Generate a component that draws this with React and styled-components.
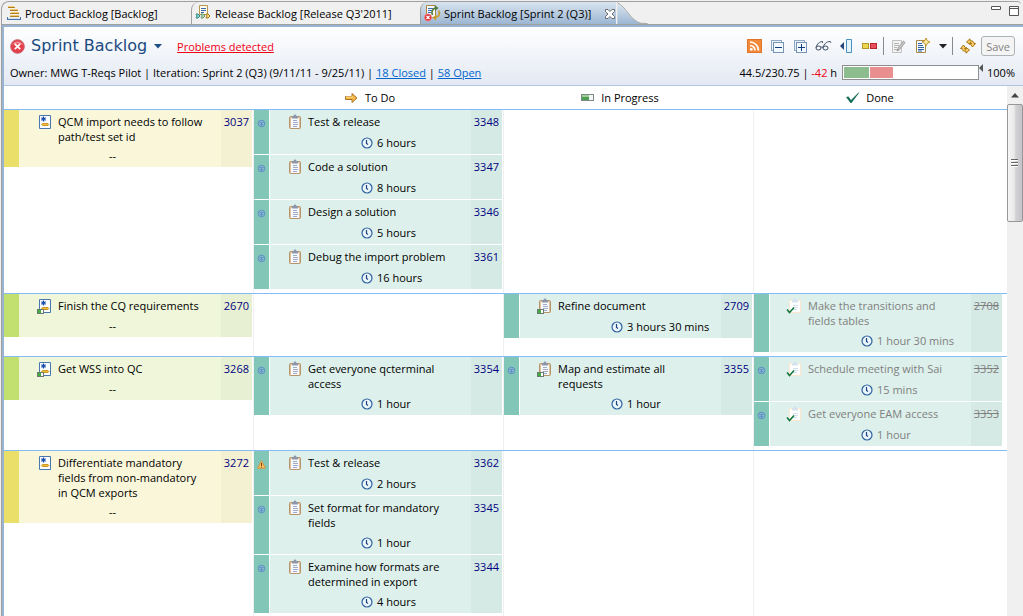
import React from "react";
import styled, { createGlobalStyle, css } from "styled-components";

const rows = [
  {
    story: { tone: "yellow", title: "QCM import needs to follow path/test set id", id: 3037 },
    todo: [
      { title: "Test & release", id: 3348, time: "6 hours", mark: "info" },
      { title: "Code a solution", id: 3347, time: "8 hours", mark: "info" },
      { title: "Design a solution", id: 3346, time: "5 hours", mark: "info" },
      { title: "Debug the import problem", id: 3361, time: "16 hours", mark: "info" },
    ],
    progress: [],
    done: [],
  },
  {
    story: { tone: "green", title: "Finish the CQ requirements", id: 2670, started: true },
    todo: [],
    progress: [{ title: "Refine document", id: 2709, time: "3 hours 30 mins" }],
    done: [{ title: "Make the transitions and fields tables", id: 2708, time: "1 hour 30 mins" }],
  },
  {
    story: { tone: "green", title: "Get WSS into QC", id: 3268, started: true },
    todo: [{ title: "Get everyone qcterminal access", id: 3354, time: "1 hour", mark: "info" }],
    progress: [{ title: "Map and estimate all requests", id: 3355, time: "1 hour", mark: "info" }],
    done: [
      { title: "Schedule meeting with Sai", id: 3352, time: "15 mins", mark: "info" },
      { title: "Get everyone EAM access", id: 3353, time: "1 hour", mark: "info" },
    ],
  },
  {
    story: {
      tone: "yellow",
      title: "Differentiate mandatory fields from non-mandatory in QCM exports",
      id: 3272,
    },
    todo: [
      { title: "Test & release", id: 3362, time: "2 hours", mark: "warn" },
      { title: "Set format for mandatory fields", id: 3345, time: "1 hour", mark: "info" },
      { title: "Examine how formats are determined in export", id: 3344, time: "4 hours", mark: "info" },
    ],
    progress: [],
    done: [],
  },
];

const tones = {
  yellow: { strip: "#e9df69", body: "#f9f6da", id: "#f4f0d2" },
  green: { strip: "#c1e06f", body: "#eff6da", id: "#e8f0d3" },
  teal: { strip: "#82c6b8", body: "#ddf0eb", id: "#d6eae5" },
};

/* ---------- icons ---------- */

function BacklogIcon() {
  return (
    <svg width="16" height="16" viewBox="0 0 16 16" shapeRendering="crispEdges">
      <path d="M2 1h6v1H2zM4 4h8v1H4zM5 7h8v1H5zM4 10h9v1H4z" fill="#f0cb74" />
      <path d="M2 2h7v1H2zM4 5h8v1H4zM4 8h9v1H4zM4 11h9v1H4z" fill="#b07f22" />
      <path d="M1 12h1v3H1zM14 12h1v3h-1zM2 14h12v1H2z" fill="#4a73a8" />
      <path d="M2 13h12v1H2z" fill="#cfe0f2" />
    </svg>
  );
}

function ReleaseIcon() {
  return (
    <svg width="17" height="16" viewBox="0 0 17 16">
      <path d="M4.500.500h8v9h-8z" fill="#fffdf0" stroke="#b9974a" />
      <path d="M6 3.500h5M6 5.500h5M6 7.500h3" stroke="#3c66a8" />
      <path d="M1 9h2l2 2-2 2H1l1-2z" fill="#8fd0c4" stroke="#2e8c86" />
      <path d="M6 9h2l2 2-2 2H6l1-2z" fill="#bfdf9a" stroke="#5d9178" />
      <path d="M11 9h2l2 2-2 2h-2l1-2z" fill="#f7df7c" stroke="#a97a1a" />
    </svg>
  );
}

function SprintIcon() {
  return (
    <svg width="17" height="17" viewBox="0 0 17 17">
      <path d="M2.500.500h9v12h-9z" fill="#f3f8ff" stroke="#b18a3c" />
      <path d="M4 3.500h5M4 5.500h4M4 7.500h3" stroke="#3e70b8" />
      <path d="M8.500 10c-1.500-3 0-6.500 3-7" fill="none" stroke="#5a7a35" strokeWidth="1.600" />
      <path d="M10.500 0l4 3-3.500 3z" fill="#4d7a3a" />
      <path d="M14.500 5.500c2 3 .5 6.500-3 7" fill="none" stroke="#c79a2c" strokeWidth="1.600" />
      <path d="M12.500 9.500l-4 3 3.500 3z" fill="#c79a2c" />
      <circle cx="4" cy="12.500" r="3.700" fill="#e0353c" stroke="#f6b3b3" strokeWidth=".6" />
      <path d="M2.500 11l3 3m0-3l-3 3" stroke="#fff" strokeWidth="1.200" />
    </svg>
  );
}

function CloseIcon() {
  return (
    <svg width="12" height="12" viewBox="0 0 12 12">
      <path
        d="M1.500 1.500h2.500l2 2 2-2h2.500v2l-2.500 2.500 2.500 2.500v2H8l-2-2-2 2H1.500v-2L4 6 1.500 3.500z"
        fill="#fff"
        stroke="#6c6c6c"
      />
    </svg>
  );
}

function ErrorIcon() {
  return (
    <svg width="15" height="15" viewBox="0 0 15 15">
      <circle cx="7.500" cy="7.500" r="6.800" fill="#e4404c" stroke="#c9606a" strokeWidth="1" />
      <path d="M2 6a6 6 0 0 1 11 0c-3-2-8-2-11 0z" fill="#f08a90" />
      <path d="M4.800 4.800l5.400 5.400m0-5.400l-5.400 5.400" stroke="#fff" strokeWidth="1.800" />
    </svg>
  );
}

function CaretIcon({ color = "#222" }) {
  return (
    <svg width="8" height="5" viewBox="0 0 8 5">
      <path d="M0 0h8L4 4.500z" fill={color} />
    </svg>
  );
}

function RssIcon() {
  return (
    <svg width="16" height="16" viewBox="0 0 16 16">
      <path d="M0 1h15v14H0z" fill="#f28a3c" />
      <path d="M.500 1.500h14v13H.500z" fill="none" stroke="#e2742a" />
      <circle cx="4.300" cy="11.300" r="1.400" fill="#fff" />
      <path d="M3 7.500a5 5 0 0 1 5 5M3 4a8.500 8.500 0 0 1 8.500 8.500" fill="none" stroke="#fff" strokeWidth="1.700" />
    </svg>
  );
}

function FoldIcon({ plus }) {
  return (
    <svg width="16" height="16" viewBox="0 0 16 16" shapeRendering="crispEdges">
      <path d="M1.500 2.500h10v10h-10z" fill="#eaf3fb" stroke="#8fa9c4" />
      <path d="M3.500 4.500h10v10h-10z" fill="#f2f9ff" stroke="#7792b2" />
      <path d="M5 9h7v1H5z" fill="#0b3c84" />
      {plus && <path d="M8 6h1v7H8z" fill="#0b3c84" />}
    </svg>
  );
}

function GlassesIcon() {
  return (
    <svg width="17" height="16" viewBox="0 0 17 16" fill="none" stroke="#3b4d66">
      <ellipse cx="3.500" cy="10" rx="2.500" ry="2" />
      <ellipse cx="10.500" cy="10" rx="2.500" ry="2" />
      <path d="M6 9.500c.4-.6 1.600-.6 2 0M1 9.500C2 6 4.500 3.500 7.500 3.500v1.500M8 9.500c1-3.500 3.500-6 7-6 .6 0 .8.600.8 1.500" />
    </svg>
  );
}

function CollapsePaneIcon() {
  return (
    <svg width="16" height="16" viewBox="0 0 16 16">
      <path d="M5 4v8L1 8z" fill="#24457a" />
      <path d="M7.500 1.500h5v13h-5z" fill="#e4f3fc" stroke="#4a90bf" />
    </svg>
  );
}

function SwatchIcon() {
  return (
    <svg width="16" height="16" viewBox="0 0 16 16" shapeRendering="crispEdges">
      <path d="M.500 5.500h6v5h-6z" fill="#ecd84c" stroke="#b3982a" />
      <path d="M8.500 5.500h6v5h-6z" fill="#e8505c" stroke="#b3262e" />
    </svg>
  );
}

function EditIcon() {
  return (
    <svg width="16" height="16" viewBox="0 0 16 16">
      <path d="M1.500 2.500h9v12h-9z" fill="#f4f4f4" stroke="#c0c0c0" />
      <path d="M3 5.500h5M3 7.500h5M3 9.500h3M3 11.500h3" stroke="#b4b4b4" />
      <path d="M7.500 11L13.500 3.500" stroke="#a8a8a8" strokeWidth="3" />
      <path d="M8 10.500L13.500 3.500" stroke="#d8d8d8" />
      <path d="M5.500 13.500l1-3 2 1.500z" fill="#888" />
    </svg>
  );
}

function NewTaskIcon() {
  return (
    <svg width="16" height="16" viewBox="0 0 16 16">
      <path d="M2.500 2.500h9v12h-9z" fill="#f6faff" stroke="#a98a45" />
      <path d="M4 5.500h4M4 7.500h5M4 9.500h6M4 11.500h6M4 13h4" stroke="#2f5fa5" />
      <path d="M12 0l1.300 2.700L16 4l-2.700 1.300L12 8l-1.300-2.700L8 4l2.700-1.300z" fill="#fbeaa0" stroke="#b98a22" strokeWidth=".9" />
    </svg>
  );
}

function SyncIcon() {
  return (
    <svg width="16" height="16" viewBox="0 0 16 16">
      <g fill="#f8d066" stroke="#a87412" strokeLinejoin="round">
        <path d="M6.500 4L10 .800v2C13 2.500 14 4 13.800 5.500h1.700l-3 3.500L10 5.500h1.500c0-.8-.5-1-1.500-1v2z" />
        <path d="M9.500 12L6 15.200v-2C3 13.500 2 12 2.200 10.500H.500l3-3.500L6 10.500H4.500c0 .8.500 1 1.500 1v-2z" />
      </g>
    </svg>
  );
}

function ArrowIcon() {
  return (
    <svg width="14" height="12" viewBox="0 0 14 12">
      <path d="M.500 4.500H7V1.500L12 6l-5 4.500v-3H.500z" fill="#f6b743" stroke="#a9742a" />
      <path d="M1 5h7" stroke="#fde39b" />
    </svg>
  );
}

function ProgressIcon() {
  return (
    <svg width="14" height="12" viewBox="0 0 14 12" shapeRendering="crispEdges">
      <path d="M.500 2.500h12v6H.500z" fill="#f4f8f4" stroke="#7c8a8a" />
      <path d="M1 3h7v5H1z" fill="#4f9e52" />
      <path d="M1 3h7v2H1z" fill="#9ccf9a" />
    </svg>
  );
}

function CheckIcon() {
  return (
    <svg width="14" height="12" viewBox="0 0 14 12">
      <path d="M0 5l2.500-.5L5 8l7.500-7.500.5.500L5.500 11H4.500z" fill="#17705a" />
    </svg>
  );
}

function StoryIcon({ started }) {
  return (
    <svg width="16" height="16" viewBox="0 0 16 16">
      <path d="M3.500 1.500h11v13h-11z" fill="#fbfdff" stroke="#4a77ad" />
      <path d="M7.500 2.500v5M5.300 3.800l4.400 2.500M9.700 3.800L5.300 6.300" stroke="#1449a8" strokeWidth="1.200" />
      <path d="M6.500 9.500h5.500l1 1-1 1H6.500l-1-1z" fill="#f0bd33" stroke="#c9962a" />
      {started && <StartedMark />}
    </svg>
  );
}

function StartedMark() {
  return (
    <g shapeRendering="crispEdges">
      <path d="M1.500 11.500h6v4h-6z" fill="#fff" stroke="#6d7a70" />
      <path d="M2 12h3v3H2z" fill="#3fae3f" />
    </g>
  );
}

function TaskIcon({ state }) {
  const done = state === "done";
  return (
    <svg width="16" height="16" viewBox="0 0 16 16">
      {done ? (
        <g>
          <path d="M3.500 2.500h11v12h-11z" fill="#fff" stroke="#fce8cc" />
          <path d="M6 3.500c0-1 1-1.500 1.500-1.500.5-2 2.500-2 3 0 .5 0 1.500.5 1.500 1.500v1H6z" fill="#d3e3f1" />
          <path d="M7 7.500h5M7 9.500h5M7 11.500h4" stroke="#cfe0ee" />
          <path d="M1 11.500l2.500 3L8 9.500" fill="none" stroke="#14773f" strokeWidth="1.600" />
        </g>
      ) : (
        <g>
          <rect x="3.500" y="2.500" width="11" height="12" rx="1" fill="#dcc19c" stroke="#b8946a" />
          <path d="M5 4h8v10H5z" fill="#f7f9fd" />
          <path d="M6 3.500c0-1 1-1.500 1.500-1.500.5-2 2.500-2 3 0 .5 0 1.500.5 1.500 1.500v1H6z" fill="#8b96ab" />
          <path d="M7 6.500h4M7 8.500h5M7 10.500h5M7 12.500h4" stroke="#8796bd" strokeWidth=".8" />
        </g>
      )}
      {state === "progress" && <StartedMark />}
    </svg>
  );
}

function ClockIcon() {
  return (
    <svg width="12" height="12" viewBox="0 0 12 12">
      <circle cx="6" cy="6" r="5" fill="#eaf5fc" stroke="#2f62a0" strokeWidth="1.200" />
      <path d="M5.500 3v3.500l1.500 1" fill="none" stroke="#1d4480" strokeWidth="1.200" />
    </svg>
  );
}

function InfoMark() {
  return (
    <svg width="9" height="9" viewBox="0 0 9 9">
      <circle cx="4.500" cy="4.500" r="3.300" fill="#86b8d0" stroke="#5a8bc0" strokeWidth=".9" />
      <path d="M2.500 3.500h4M4.500 3.500V7M3 5.500h3" stroke="#5a8bc0" strokeWidth=".8" />
    </svg>
  );
}

function WarnMark() {
  return (
    <svg width="9" height="9" viewBox="0 0 9 9">
      <path d="M4.500.800L8.300 8.200H.700z" fill="#f8c65a" stroke="#d8923a" strokeLinejoin="round" />
      <path d="M4.500 3v3M4.500 6.700v1" stroke="#7a4310" />
    </svg>
  );
}

/* ---------- board ---------- */

function Card({ item, kind }) {
  const tone = tones[item.tone || "teal"];
  return (
    <CardBox>
      <Strip $color={tone.strip}>
        {item.mark === "info" && <InfoMark />}
        {item.mark === "warn" && <WarnMark />}
      </Strip>
      <CardBody $color={tone.body} $joined={kind === "story"}>
        {kind === "story" ? <StoryIcon started={item.started} /> : <TaskIcon state={kind} />}
        <CardText $muted={kind === "done"}>
          <CardTitle>{item.title}</CardTitle>
          {kind === "story" ? (
            <Estimate>--</Estimate>
          ) : (
            <Time>
              <ClockIcon />
              {item.time}
            </Time>
          )}
        </CardText>
      </CardBody>
      <CardId $color={tone.id} $closed={kind === "done"}>
        {item.id}
      </CardId>
    </CardBox>
  );
}

function Column({ items, kind }) {
  return (
    <Cell>
      {items.map((item) => (
        <Card key={item.id} item={item} kind={kind} />
      ))}
    </Cell>
  );
}

export default function App() {
  return (
    <Window>
      <GlobalStyle />
      <TabBar role="tablist">
        <Tab role="tab" $size={189}>
          <BacklogIcon />
          Product Backlog [Backlog]
        </Tab>
        <Tab role="tab" $size={229} $divided>
          <ReleaseIcon />
          Release Backlog [Release Q3'2011]
        </Tab>
        <ActiveTab role="tab" aria-selected="true">
          <SprintIcon />
          Sprint Backlog [Sprint 2 (Q3)]
          <CloseIcon />
        </ActiveTab>
        <TabTail width="33" height="25" viewBox="0 0 33 25">
          <defs>
            <linearGradient id="tail" x1="0" y1="0" x2="0" y2="1">
              <stop offset="0" stopColor="#d9e4ef" />
              <stop offset="1" stopColor="#99b4d1" />
            </linearGradient>
          </defs>
          <path d="M0 2C9 5 14 21 27 23.500L33 25H0z" fill="url(#tail)" />
          <path d="M0 1C9 4 14 20 25 23l8 .500" fill="none" stroke="#a0a0a0" />
        </TabTail>
        <TabFill />
        <WindowButton aria-label="Minimize">
          <svg width="10" height="10" viewBox="0 0 10 10">
            <path d="M.500 .500h9v3h-9z" fill="#fff" stroke="#555" />
          </svg>
        </WindowButton>
        <WindowButton aria-label="Maximize">
          <svg width="10" height="10" viewBox="0 0 10 10">
            <path d="M.500 .500h9v9h-9zM.500 2.500h9" fill="#fff" stroke="#555" />
          </svg>
        </WindowButton>
      </TabBar>

      <Editor>
        <Header>
          <HeaderRow $height={20}>
            <ErrorIcon />
            <Heading>Sprint Backlog</Heading>
            <IconButton aria-label="Switch backlog">
              <CaretIcon color="#1f4f86" />
            </IconButton>
            <ProblemLink href="#problems">Problems detected</ProblemLink>
            <Toolbar>
              <ToolButton aria-label="Feed"><RssIcon /></ToolButton>
              <ToolButton aria-label="Collapse all"><FoldIcon /></ToolButton>
              <ToolButton aria-label="Expand all"><FoldIcon plus /></ToolButton>
              <ToolButton aria-label="Find"><GlassesIcon /></ToolButton>
              <ToolButton aria-label="Hide column"><CollapsePaneIcon /></ToolButton>
              <ToolButton aria-label="Colors"><SwatchIcon /></ToolButton>
              <Separator />
              <ToolButton aria-label="Edit" disabled><EditIcon /></ToolButton>
              <ToolButton aria-label="New task"><NewTaskIcon /></ToolButton>
              <ToolButton $size={12} aria-label="New task menu"><CaretIcon /></ToolButton>
              <Separator />
              <ToolButton aria-label="Refresh"><SyncIcon /></ToolButton>
              <SaveButton disabled>Save</SaveButton>
            </Toolbar>
          </HeaderRow>
          <HeaderRow $height={16}>
            <Summary>
              Owner: MWG T-Reqs Pilot | Iteration: Sprint 2 (Q3) (9/11/11 - 9/25/11) |{" "}
              <a href="#closed">18 Closed</a> | <a href="#open">58 Open</a>
            </Summary>
            <Hours>
              44.5/230.75 | <em>-42</em> h
            </Hours>
            <Meter role="progressbar" aria-valuenow={19} aria-label="Hours">
              <MeterPart $color="#8dbd8e" $width={25} />
              <MeterPart $color="#e98f8f" $width={23} />
            </Meter>
            <MeterMark width="4" height="8" viewBox="0 0 4 8">
              <path d="M4 0v8L0 4z" fill="#555" />
            </MeterMark>
            <Percent>100%</Percent>
          </HeaderRow>
        </Header>

        <BoardArea>
          <Board>
            <ColumnHeads>
              <ColumnHead />
              <ColumnHead><ArrowIcon />To Do</ColumnHead>
              <ColumnHead><ProgressIcon />In Progress</ColumnHead>
              <ColumnHead><CheckIcon />Done</ColumnHead>
            </ColumnHeads>
            {rows.map((row) => (
              <Row key={row.story.id}>
                <Column items={[row.story]} kind="story" />
                <Column items={row.todo} kind="todo" />
                <Column items={row.progress} kind="progress" />
                <Column items={row.done} kind="done" />
              </Row>
            ))}
          </Board>
          <ScrollBar>
            <ScrollArrow aria-label="Scroll up">
              <svg width="8" height="5" viewBox="0 0 8 5">
                <path d="M4 0l4 4.500H0z" fill="#444" />
              </svg>
            </ScrollArrow>
            <ScrollThumb>
              <svg width="8" height="8" viewBox="0 0 8 8" shapeRendering="crispEdges">
                <path d="M0 0h7v1H0zM0 3h7v1H0zM0 6h7v1H0z" fill="#666" />
                <path d="M0 1h7v1H0zM0 4h7v1H0zM0 7h7v1H0z" fill="#fff" />
              </svg>
            </ScrollThumb>
          </ScrollBar>
        </BoardArea>
      </Editor>
    </Window>
  );
}

const GlobalStyle = createGlobalStyle`
  * {
    box-sizing: border-box;
  }
  body {
    margin: 0;
    background: #f0f0f0;
    color: #000;
    font: 11px/15px "Open Sans", "Noto Sans", sans-serif;
  }
  button {
    margin: 0;
    padding: 0;
    border: none;
    background: none;
    color: inherit;
    font: inherit;
  }
  svg {
    flex: none;
    display: block;
  }
`;

const Window = styled.div`
  display: flex;
  flex-direction: column;
  height: 100vh;
  padding-top: 1px;
  overflow: hidden;
`;

const TabBar = styled.div`
  display: flex;
  flex: none;
  height: 24px;
  margin: 0 2px 0 1px;
  border-top: 1px solid #a0a0a0;
  border-left: 1px solid #a0a0a0;
  border-radius: 8px 4px 0 0;
`;

const tabBase = css`
  display: flex;
  align-items: center;
  gap: 3px;
  padding-left: 4px;
  white-space: nowrap;
`;

const Tab = styled.button`
  ${tabBase}
  width: ${(p) => p.$size}px;
  border-bottom: 1px solid #a0a0a0;
  ${(p) =>
    p.$divided &&
    css`
      padding-left: 3px;
      border-left: 1px solid #a0a0a0;
      border-top-left-radius: 8px;
    `}
`;

const ActiveTab = styled.button`
  ${tabBase}
  padding-left: 3px;
  border-left: 1px solid #a0a0a0;
  border-top-left-radius: 8px;
  background: linear-gradient(#d9e4ef, #99b4d1);
  & > svg:last-child {
    margin-left: 10px;
  }
`;

const TabTail = styled.svg`
  height: 100%;
`;

const TabFill = styled.div`
  flex: 1;
  border-bottom: 1px solid #a0a0a0;
`;

const WindowButton = styled.button`
  display: flex;
  align-items: flex-start;
  padding: 4px 2px 0 6px;
  border-bottom: 1px solid #a0a0a0;
`;

const Editor = styled.main`
  display: flex;
  flex: 1;
  flex-direction: column;
  min-height: 0;
  margin-left: 2px;
  border: solid #99b4d1;
  border-width: 2px 0 0 2px;
  outline: 1px solid #a0a0a0;
  background: #fff;
`;

const Header = styled.header`
  flex: none;
  padding: 9px 8px 5px 6px;
  border-bottom: 1px solid #b0c6de;
  background: linear-gradient(#fff, #e3e9f3);
`;

const HeaderRow = styled.div`
  display: flex;
  align-items: center;
  height: ${(p) => p.$height}px;
  & + & {
    margin-top: 8px;
  }
`;

const Heading = styled.h1`
  margin: 0 7px 0 6px;
  color: #1b4a80;
  font: 16px/20px "DejaVu Sans", Verdana, sans-serif;
`;

const ProblemLink = styled.a`
  margin-left: 15px;
  color: #f00014;
`;

const IconButton = styled.button`
  display: flex;
  align-items: center;
`;

const Toolbar = styled.div`
  display: flex;
  align-items: center;
  gap: 5px;
  margin-left: auto;
`;

const ToolButton = styled(IconButton)`
  justify-content: flex-end;
  width: ${(p) => p.$size || 18}px;
`;

const Separator = styled.span`
  width: 1px;
  height: 18px;
  background: #8a8a8a;
`;

const SaveButton = styled.button`
  height: 20px;
  padding: 0 4px;
  border: 1px solid #adb2b5;
  border-radius: 3px;
  background: #f4f4f4;
  color: #838383;
`;

const Summary = styled.span`
  white-space: nowrap;
  & > a {
    color: #0066cc;
  }
`;

const Hours = styled.span`
  margin: 0 5px 0 auto;
  white-space: nowrap;
  & > em {
    color: #f00014;
    font-style: normal;
  }
`;

const Meter = styled.div`
  display: flex;
  gap: 1px;
  width: 137px;
  height: 15px;
  padding: 1px;
  border: 1px solid #8e8f8f;
  background: #fff;
`;

const MeterPart = styled.div`
  width: ${(p) => p.$width}px;
  background: ${(p) => p.$color};
`;

const MeterMark = styled.svg`
  align-self: flex-start;
`;

const Percent = styled.span`
  margin-left: 4px;
`;

const BoardArea = styled.div`
  display: flex;
  flex: 1;
  min-height: 0;
`;

const Board = styled.section`
  flex: 1;
  overflow: hidden;
`;

const columns = css`
  display: grid;
  grid-template-columns: repeat(4, minmax(0, 1fr));
  padding-right: 3px;
  border-bottom: 1px solid #84bdf6;
`;

const ColumnHeads = styled.div`
  ${columns}
  height: 24px;
`;

const ColumnHead = styled.div`
  display: flex;
  align-items: center;
  justify-content: center;
  gap: 6px;
  padding-right: 18px;
`;

const Row = styled.div`
  ${columns}
`;

const Cell = styled.div`
  display: flex;
  flex-direction: column;
  gap: 1px;
  padding: 0 1px 4px 0;
  border-right: 1px solid #f0f0f0;
  &:last-child {
    border-right-color: transparent;
  }
`;

const CardBox = styled.article`
  display: flex;
`;

const Strip = styled.div`
  display: flex;
  flex: none;
  justify-content: center;
  width: 15px;
  padding-top: 9px;
  background: ${(p) => p.$color};
`;

const CardBody = styled.div`
  display: flex;
  flex: 1;
  gap: 6px;
  min-width: 0;
  margin-left: ${(p) => (p.$joined ? 0 : 1)}px;
  padding: 4px 14px 4px ${(p) => (p.$joined ? 17 : 16)}px;
  background: ${(p) => p.$color};
`;

const CardText = styled.div`
  flex: 1;
  min-width: 0;
  color: ${(p) => (p.$muted ? "#808080" : "#000")};
`;

const CardTitle = styled.div`
  min-height: 16px;
  margin-bottom: 5px;
`;

const Estimate = styled.div`
  padding-left: 51px;
  line-height: 14px;
`;

const Time = styled.div`
  display: flex;
  align-items: center;
  gap: 4px;
  padding-left: 53px;
  white-space: nowrap;
`;

const CardId = styled.div`
  flex: none;
  width: 31px;
  padding: 4px 3px 0 0;
  background: ${(p) => p.$color};
  color: ${(p) => (p.$closed ? "#808080" : "#000080")};
  text-align: right;
  text-decoration: ${(p) => (p.$closed ? "line-through" : "none")};
`;

const ScrollBar = styled.div`
  display: flex;
  flex: none;
  flex-direction: column;
  width: 16px;
  background: #f0f0f0;
`;

const ScrollArrow = styled.button`
  display: flex;
  align-items: center;
  justify-content: center;
  height: 18px;
`;

const ScrollThumb = styled.div`
  display: flex;
  align-items: center;
  justify-content: center;
  height: 118px;
  border: 1px solid #979797;
  border-radius: 2px;
  background: linear-gradient(90deg, #f5f5f5, #e9e9eb 45%, #d2d2d5 55%, #c4c4c9);
`;
